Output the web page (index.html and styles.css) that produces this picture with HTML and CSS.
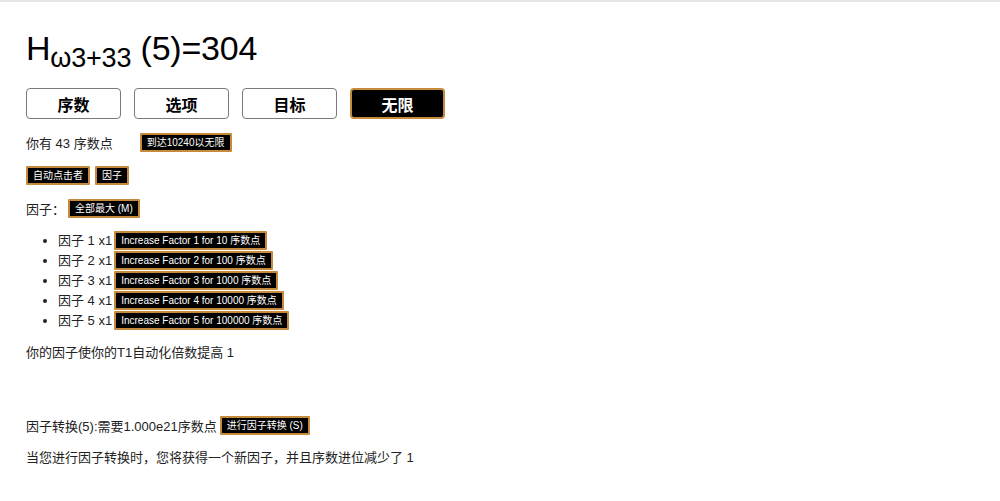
FILE: index.html
```html
<!DOCTYPE html>
<html>
<head>
<meta charset="utf-8">
<link rel="stylesheet" href="styles.css">
</head>
<body>
<div class="page">
  <h1 class="title">H<span class="sub">ω3+33</span> (5)=304</h1>
  <div class="tabs">
    <button class="tab">序数</button>
    <button class="tab">选项</button>
    <button class="tab">目标</button>
    <button class="tab active">无限</button>
  </div>
  <div class="line l1"><span class="txt">你有 43 序数点</span><button class="btn gap-l">到达10240以无限</button></div>
  <div class="line l2"><button class="btn">自动点击者</button><button class="btn">因子</button></div>
  <div class="line l3"><span class="txt">因子：</span><button class="btn gap-xs">全部最大 (M)</button></div>
  <ul class="factors">
    <li><span class="txt">因子 1 x1</span><button class="btn">Increase Factor 1 for 10 序数点</button></li>
    <li><span class="txt">因子 2 x1</span><button class="btn">Increase Factor 2 for 100 序数点</button></li>
    <li><span class="txt">因子 3 x1</span><button class="btn">Increase Factor 3 for 1000 序数点</button></li>
    <li><span class="txt">因子 4 x1</span><button class="btn">Increase Factor 4 for 10000 序数点</button></li>
    <li><span class="txt">因子 5 x1</span><button class="btn">Increase Factor 5 for 100000 序数点</button></li>
  </ul>
  <p class="para p1">你的因子使你的T1自动化倍数提高 1</p>
  <div class="line l4"><span class="txt">因子转换(5):需要1.000e21序数点</span><button class="btn gap-xs">进行因子转换 (S)</button></div>
  <p class="para p2">当您进行因子转换时，您将获得一个新因子，并且序数进位减少了 1</p>
</div>
</body>
</html>
```
FILE: styles.css
```css
html, body {
  margin: 0;
  padding: 0;
  background: #fff;
}
body {
  border-top: 2px solid #e6e6e6;
  font-family: "Liberation Sans", Arial, "Noto Sans CJK SC", sans-serif;
  color: #222;
  font-size: 13px;
}
.page {
  padding-left: 26px;
}
.title {
  margin: 28px 0 0 0;
  font-size: 34px;
  line-height: 37px;
  font-weight: normal;
  color: #000;
  letter-spacing: -0.2px;
}
.sub {
  font-size: 27px;
  vertical-align: -7px;
  line-height: 0;
}
.tabs {
  display: flex;
  gap: 13px;
  margin-top: 21px;
}
.tab {
  width: 95px;
  height: 31px;
  box-sizing: border-box;
  border: 1px solid #7a7a7a;
  border-radius: 4px;
  background: #fff;
  color: #000;
  font-family: "Liberation Sans", Arial, "Noto Sans CJK SC", sans-serif;
  font-size: 16px;
  font-weight: bold;
  padding: 0;
}
.tab.active {
  background: #000;
  color: #fff;
  border: 2px solid #c58a3c;
}
.line {
  display: flex;
  align-items: center;
  height: 19px;
}
.l1 { margin-top: 14px; }
.l2 { margin-top: 14px; gap: 5px; }
.l3 { margin-top: 14px; }
.l4 { margin-top: 54px; }
.txt {
  font-size: 13px;
  color: #222;
}
.btn {
  height: 19px;
  box-sizing: border-box;
  background: #000;
  color: #fff;
  border: 2px solid #c58a3c;
  border-radius: 1px;
  font-family: "Liberation Sans", Arial, "Noto Sans CJK SC", sans-serif;
  font-size: 10px;
  padding: 0 5px;
  line-height: 15px;
}
.gap-l { margin-left: 27px; }
.gap-xs { margin-left: 3px; }
.factors {
  margin: 13px 0 0 0;
  padding-left: 32px;
}
.factors li {
  height: 20px;
  line-height: 20px;
}
.factors li .btn {
  vertical-align: middle;
  margin-left: 2px;
  position: relative;
  top: -1px;
}
.para {
  margin: 0;
  font-size: 13px;
  line-height: 19px;
}
.p1 { margin-top: 12px; }
.p2 { margin-top: 13px; }
```
